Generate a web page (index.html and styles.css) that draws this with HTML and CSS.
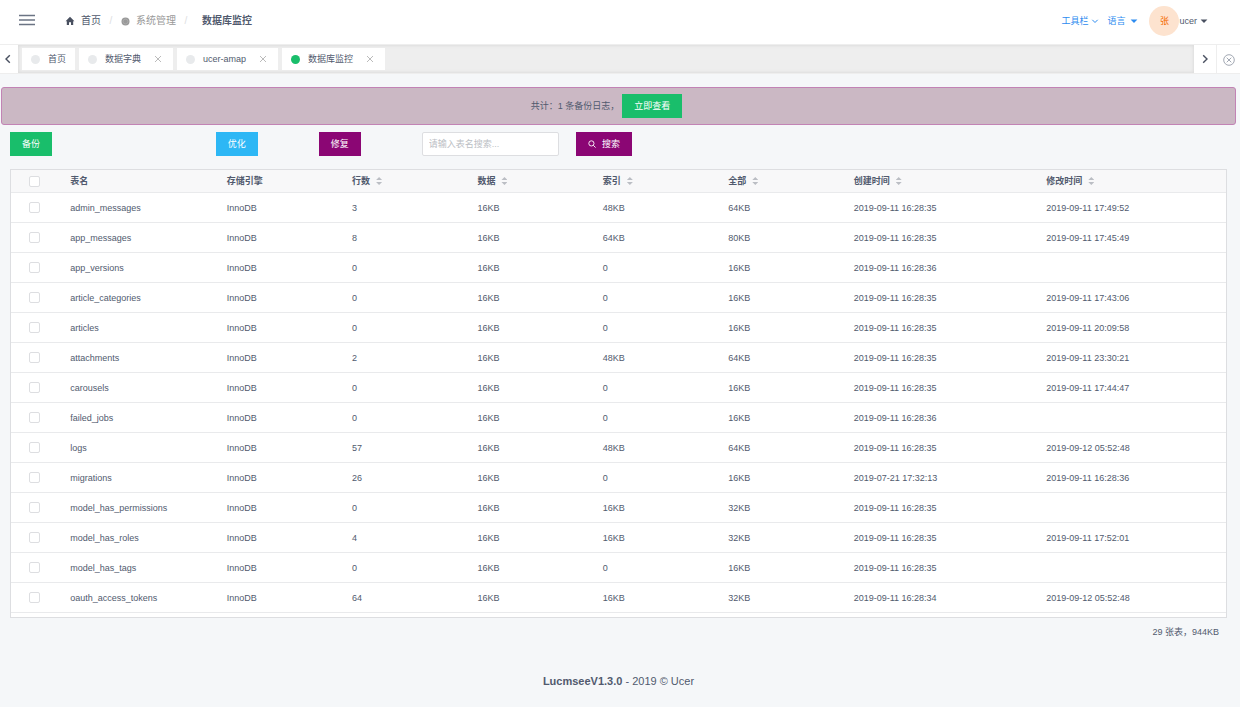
FILE: index.html
```html
<!DOCTYPE html>
<html lang="zh-CN">
<head>
<meta charset="utf-8">
<title>数据库监控</title>
<link rel="stylesheet" href="styles.css">
</head>
<body>
<header class="topbar">
  <button class="menu-toggle" type="button" aria-label="菜单"><svg width="16" height="12" viewBox="0 0 16 12"><path d="M0 1.500h16M0 6h16M0 10.500h16" stroke="#6b7484" stroke-width="1.700"/></svg></button>
  <nav class="crumbs">
    <a class="crumb" href="#"><svg class="crumb-icon" width="10" height="10" viewBox="0 0 10 10"><path d="M5 .8 9.400 5.200H8.200V9H6V6.200H4V9H1.800V5.200H.6z" fill="#495060"/></svg>首页</a>
    <span class="slash">/</span>
    <span class="crumb muted"><svg class="crumb-icon" width="9" height="9" viewBox="0 0 9 9"><circle cx="4.500" cy="4.500" r="4" fill="#999"/><circle cx="4.500" cy="4.500" r="2.400" fill="none" stroke="#b5b5b5" stroke-width=".6"/></svg>系统管理</span>
    <span class="slash">/</span>
    <span class="crumb current">数据库监控</span>
  </nav>
  <div class="tools">
    <a class="tool" href="#">工具栏<svg width="8" height="8" viewBox="0 0 8 8"><path d="m1.300 2.800 2.700 2.700 2.700-2.700" fill="none" stroke="#2d8cf0"/></svg></a>
    <a class="tool lang" href="#">语言<svg width="8" height="8" viewBox="0 0 8 8"><path d="M.6 2.500h6.800L4 6z" fill="#2d8cf0"/></svg></a>
    <a class="user" href="#"><span class="avatar">张</span>ucer<svg width="8" height="8" viewBox="0 0 8 8"><path d="M.6 2.500h6.800L4 6z" fill="#495060"/></svg></a>
  </div>
</header>
<div class="tabbar">
  <button class="tab-prev" type="button" aria-label="向左"><svg width="8" height="10" viewBox="0 0 8 10"><path d="M5.800 1.200 2 5l3.800 3.800" fill="none" stroke="#495060" stroke-width="1.400"/></svg></button>
  <div class="tabs">
    <div class="tab"><span class="dot"></span>首页</div>
    <div class="tab"><span class="dot"></span>数据字典<button class="tab-close" type="button" aria-label="关闭"><svg width="8" height="8" viewBox="0 0 8 8"><path d="m1 1 6 6m0-6L1 7" stroke="#aaa" stroke-width=".8"/></svg></button></div>
    <div class="tab"><span class="dot"></span>ucer-amap<button class="tab-close" type="button" aria-label="关闭"><svg width="8" height="8" viewBox="0 0 8 8"><path d="m1 1 6 6m0-6L1 7" stroke="#aaa" stroke-width=".8"/></svg></button></div>
    <div class="tab"><span class="dot active"></span>数据库监控<button class="tab-close" type="button" aria-label="关闭"><svg width="8" height="8" viewBox="0 0 8 8"><path d="m1 1 6 6m0-6L1 7" stroke="#aaa" stroke-width=".8"/></svg></button></div>
  </div>
  <button class="tab-next" type="button" aria-label="向右"><svg width="8" height="10" viewBox="0 0 8 10"><path d="M2.200 1.200 6 5 2.200 8.800" fill="none" stroke="#495060" stroke-width="1.400"/></svg></button>
  <button class="tab-all" type="button" aria-label="关闭全部"><svg width="12" height="12" viewBox="0 0 12 12"><g fill="none" stroke="#8a92a0" stroke-width=".8"><circle cx="6" cy="6" r="5.300"/><path d="m3.700 3.700 4.600 4.600m0-4.600L3.700 8.300"/></g></svg></button>
</div>
<main>
  <div class="alert"><span>共计：1 条备份日志，</span><button class="btn green" type="button">立即查看</button></div>
  <form class="toolbar">
    <div><button class="btn green" type="button">备份</button></div>
    <div><button class="btn blue" type="button">优化</button></div>
    <div><button class="btn purple" type="button">修复</button></div>
    <div class="search-cell"><input class="search" type="text" aria-label="表名" placeholder="请输入表名搜索..."></div>
    <div><button class="btn purple" type="button"><svg width="8" height="8" viewBox="0 0 8 8"><g fill="none" stroke="#fff" stroke-width=".9"><circle cx="3.400" cy="3.400" r="2.600"/><path d="m5.300 5.300 2.300 2.300"/></g></svg>搜索</button></div>
  </form>
  <div class="table-box">
    <table class="table">
      <colgroup><col class="c-check"><col class="c-name"><col class="c-mid"><col class="c-mid"><col class="c-mid"><col class="c-mid"><col class="c-mid"><col class="c-time"><col class="c-time"></colgroup>
      <thead><tr><th class="check"><input type="checkbox" aria-label="全选"></th><th>表名</th><th>存储引擎</th><th class="sort">行数</th><th class="sort">数据</th><th class="sort">索引</th><th class="sort">全部</th><th class="sort">创建时间</th><th class="sort">修改时间</th></tr></thead>
      <tbody id="rows"></tbody>
    </table>
  </div>
  <p class="total">29 张表，944KB</p>
</main>
<footer class="footer"><strong>LucmseeV1.3.0</strong> - 2019 © Ucer</footer>
<script src="app.js"></script>
</body>
</html>
```
FILE: styles.css
```css
* { box-sizing: border-box; }
body {
  margin: 0;
  background: #f5f7f9;
  color: #515a6e;
  font: 9px/12px "Liberation Sans", "Noto Sans CJK SC", sans-serif;
}
button, input { font: inherit; color: inherit; }
button { padding: 0; border: 0; background: none; cursor: pointer; }
a { color: inherit; text-decoration: none; }
svg { display: block; flex: none; }

.topbar {
  display: flex;
  align-items: center;
  height: 44px;
  padding: 0 32px 2px 19px;
  background: #fff;
}
.menu-toggle { padding-bottom: 3px; }
.crumbs { display: flex; align-items: center; margin-left: 30px; font-size: 10px; line-height: 16px; }
.crumb { display: flex; align-items: center; }
.crumb-icon { margin-right: 6px; }
.muted { color: #999; }
.slash { width: 20px; text-align: center; color: #dddee1; }
.current { margin-left: 6px; font-weight: bold; }
.tools { display: flex; align-items: center; margin-left: auto; }
.tool { display: flex; align-items: center; gap: 3px; color: #2d8cf0; }
.lang { margin-left: 8px; gap: 5px; }
.user { display: flex; align-items: center; margin-left: 11px; }
.user svg { margin-left: 3px; }
.avatar {
  width: 30px;
  height: 30px;
  border-radius: 50%;
  background: #fde3cf;
  color: #f56a00;
  line-height: 30px;
  text-align: center;
}

.tabbar {
  display: flex;
  height: 30px;
  border-top: 1px solid #eee;
  border-bottom: 1px solid #eee;
  background: #fff;
}
.tab-prev, .tab-next, .tab-all { display: flex; align-items: center; justify-content: center; }
.tab-prev { width: 18px; padding-right: 3px; }
.tab-next { width: 22px; }
.tab-all { width: 24px; border-left: 1px solid #eee; padding-top: 2px; }
.tabs {
  display: flex;
  flex: 1;
  gap: 4px;
  padding: 3px 4px;
  background: #eee;
  box-shadow: inset 0 0 3px 1px #ddd;
}
.tab { display: flex; align-items: center; padding: 0 9px; background: #fff; }
.dot { width: 9px; height: 9px; margin-right: 8px; border-radius: 50%; background: #e8eaec; }
.dot.active { background: #19be6b; }
.tab-close { margin-left: 13px; margin-right: 2px; }

.alert {
  display: flex;
  align-items: center;
  justify-content: center;
  gap: 3px;
  margin: 13px 4px 0 1px;
  padding: 6px 36px;
  padding-left: 12px;
  border: 1px solid #c283b5;
  border-radius: 3px;
  background: #cbb8c4;
}
.btn {
  display: inline-flex;
  align-items: center;
  gap: 6px;
  height: 24px;
  padding: 0 12px;
  color: #fff;
}
.green { background: #19be6b; }
.blue { background: #2db7f5; }
.purple { background: #8b0674; }
.toolbar {
  display: grid;
  grid-template-columns: 40fr 20fr 20fr 30fr 129fr;
  margin: 7px 0 13px 10px;
}
.toolbar > div { display: flex; }
.search-cell { padding-right: 17px; }
.search {
  width: 100%;
  height: 24px;
  padding: 0 6px;
  border: 1px solid #dddee1;
  border-radius: 2px;
  background: #fff;
}
.search::placeholder { color: #bbbec4; }

.table-box {
  margin: 0 13px 0 10px;
  padding-bottom: 4px;
  border: 1px solid #dddee1;
  background: #fff;
}
.table { width: 100%; table-layout: fixed; border-collapse: separate; border-spacing: 0; }
.c-check { width: 46px; }
.c-name { width: 156px; }
.c-mid { width: 125px; }
.c-time { width: 192px; }
.table th, .table td { padding: 0 13px; border-bottom: 1px solid #e9eaec; text-align: left; }
.table th { height: 23px; background: #f8f8f9; }
.table td { height: 30px; }
.table .check { padding: 0; text-align: center; }
.table input {
  display: block;
  width: 11px;
  height: 11px;
  margin: 0 auto;
  border: 1px solid #dddee1;
  border-radius: 2px;
  background: #fff;
  appearance: none;
}
.sort::after {
  content: "";
  display: inline-block;
  width: 6px;
  height: 8px;
  margin-left: 6px;
  vertical-align: -1px;
  background: #bbbec4;
  clip-path: polygon(50% 0, 100% 38%, 0 38%, 0 62%, 100% 62%, 50% 100%, 0 62%, 0 38%);
}
.total { margin: 8px 21px 0 0; text-align: right; }
.footer { margin: 35px 3px 0 0; padding-bottom: 18px; font-size: 11px; line-height: 16px; text-align: center; }
```
FILE: app.js
```js
const tables = [
  ["admin_messages", "3", "16KB", "48KB", "64KB", "2019-09-11 16:28:35", "2019-09-11 17:49:52"],
  ["app_messages", "8", "16KB", "64KB", "80KB", "2019-09-11 16:28:35", "2019-09-11 17:45:49"],
  ["app_versions", "0", "16KB", "0", "16KB", "2019-09-11 16:28:36", ""],
  ["article_categories", "0", "16KB", "0", "16KB", "2019-09-11 16:28:35", "2019-09-11 17:43:06"],
  ["articles", "0", "16KB", "0", "16KB", "2019-09-11 16:28:35", "2019-09-11 20:09:58"],
  ["attachments", "2", "16KB", "48KB", "64KB", "2019-09-11 16:28:35", "2019-09-11 23:30:21"],
  ["carousels", "0", "16KB", "0", "16KB", "2019-09-11 16:28:35", "2019-09-11 17:44:47"],
  ["failed_jobs", "0", "16KB", "0", "16KB", "2019-09-11 16:28:36", ""],
  ["logs", "57", "16KB", "48KB", "64KB", "2019-09-11 16:28:35", "2019-09-12 05:52:48"],
  ["migrations", "26", "16KB", "0", "16KB", "2019-07-21 17:32:13", "2019-09-11 16:28:36"],
  ["model_has_permissions", "0", "16KB", "16KB", "32KB", "2019-09-11 16:28:35", ""],
  ["model_has_roles", "4", "16KB", "16KB", "32KB", "2019-09-11 16:28:35", "2019-09-11 17:52:01"],
  ["model_has_tags", "0", "16KB", "0", "16KB", "2019-09-11 16:28:35", ""],
  ["oauth_access_tokens", "64", "16KB", "16KB", "32KB", "2019-09-11 16:28:34", "2019-09-12 05:52:48"]
];
const body = document.getElementById("rows");
for (const [name, ...rest] of tables) {
  const row = body.insertRow();
  const check = row.insertCell();
  check.className = "check";
  const box = document.createElement("input");
  box.type = "checkbox";
  box.setAttribute("aria-label", name);
  check.append(box);
  for (const text of [name, "InnoDB", ...rest]) {
    row.insertCell().textContent = text;
  }
}
```
